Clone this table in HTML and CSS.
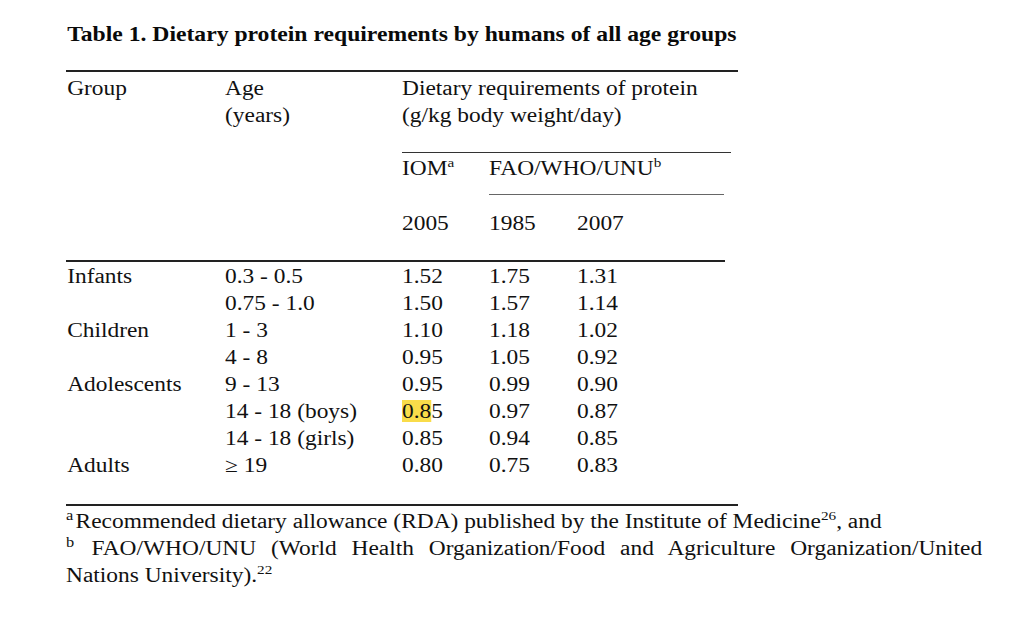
FILE: index.html
```html
<!DOCTYPE html>
<html>
<head>
<meta charset="utf-8">
<link rel="stylesheet" href="styles.css">
</head>
<body>
<div class="page">
  <h1 class="title">Table 1. Dietary protein requirements by humans of all age groups</h1>
  <div class="table">
    <div class="rule rule-top"></div>
    <div class="row head">
      <div class="c1">Group</div>
      <div>Age<br>(years)</div>
      <div class="span3">Dietary requirements of protein<br>(g/kg body weight/day)</div>
    </div>
    <div class="rule rule-diet"></div>
    <div class="row sub">
      <div class="c1"></div>
      <div></div>
      <div>IOM<sup>a</sup></div>
      <div class="span2">FAO/WHO/UNU<sup>b</sup></div>
    </div>
    <div class="rule rule-fao"></div>
    <div class="row years">
      <div class="c1"></div>
      <div></div>
      <div>2005</div>
      <div>1985</div>
      <div>2007</div>
    </div>
    <div class="rule rule-mid"></div>
    <div class="body">
      <div class="row"><div class="c1">Infants</div><div>0.3 - 0.5</div><div>1.52</div><div>1.75</div><div>1.31</div></div>
      <div class="row"><div class="c1"></div><div>0.75 - 1.0</div><div>1.50</div><div>1.57</div><div>1.14</div></div>
      <div class="row"><div class="c1">Children</div><div>1 - 3</div><div>1.10</div><div>1.18</div><div>1.02</div></div>
      <div class="row"><div class="c1"></div><div>4 - 8</div><div>0.95</div><div>1.05</div><div>0.92</div></div>
      <div class="row"><div class="c1">Adolescents</div><div>9 - 13</div><div>0.95</div><div>0.99</div><div>0.90</div></div>
      <div class="row"><div class="c1"></div><div>14 - 18 (boys)</div><div><span class="hl">0.8</span>5</div><div>0.97</div><div>0.87</div></div>
      <div class="row"><div class="c1"></div><div>14 - 18 (girls)</div><div>0.85</div><div>0.94</div><div>0.85</div></div>
      <div class="row"><div class="c1">Adults</div><div>&ge; 19</div><div>0.80</div><div>0.75</div><div>0.83</div></div>
    </div>
    <div class="rule rule-bottom"></div>
  </div>
  <div class="notes">
    <div class="note-line"><sup class="mark">a</sup>Recommended dietary allowance (RDA) published by the Institute of Medicine<sup>26</sup>, and</div>
    <div class="note-line justify"><sup class="mark">b</sup> FAO/WHO/UNU (World Health Organization/Food and Agriculture Organization/United</div>
    <div class="note-line">Nations University).<sup>22</sup></div>
  </div>
</div>
</body>
</html>
```

FILE: styles.css
```css
html, body {
  margin: 0;
  padding: 0;
  background: #ffffff;
}

body {
  font-family: "Liberation Serif", "Times New Roman", serif;
  font-size: 20px;
  color: #111111;
  overflow: hidden;
}

.page {
  padding: 22px 0 0 66px;
}

.title {
  margin: 0;
  padding-left: 1px;
  width: max-content;
  font-size: 21px;
  line-height: 24px;
  font-weight: bold;
  color: #0a0a0a;
  white-space: nowrap;
  transform: scaleX(1.126);
  transform-origin: 0 0;
}

.table {
  width: 672px;
}

.rule {
  height: 0;
}

.rule-top {
  margin-top: 24px;
  border-top: 2px solid #222222;
}

.row {
  display: grid;
  grid-template-columns: 159px 177px 87px 88px 1fr;
  line-height: 27px;
  white-space: nowrap;
}

.row > div {
  transform: scaleX(1.17);
  transform-origin: 0 0;
}

.c1 {
  padding-left: 1px;
}

.span3 {
  grid-column: span 3;
}

.span2 {
  grid-column: span 2;
}

.head {
  margin-top: 3px;
}

.rule-diet {
  margin-top: 23px;
  margin-left: 336px;
  width: 329px;
  border-top: 1px solid #333333;
}

.sub {
  margin-top: 2px;
}

.rule-fao {
  margin-top: 12px;
  margin-left: 423px;
  width: 235px;
  border-top: 1px solid #666666;
}

.years {
  margin-top: 15px;
}

.rule-mid {
  margin-top: 23px;
  width: 659px;
  border-top: 2px solid #222222;
}

.body {
  margin-top: 1px;
}

.rule-bottom {
  margin-top: 25px;
  border-top: 2px solid #222222;
}

sup {
  font-size: 13px;
  line-height: 0;
  vertical-align: 8px;
}

.mark {
  font-size: 14px;
  margin-right: 2px;
}

.hl {
  background: #f9dc4a;
}

.notes {
  margin-top: 2px;
  width: 783px;
  line-height: 27px;
  transform: scaleX(1.17);
  transform-origin: 0 0;
}

.note-line {
  white-space: nowrap;
}

.note-line.justify {
  white-space: normal;
  text-align: justify;
  text-align-last: justify;
}
```
